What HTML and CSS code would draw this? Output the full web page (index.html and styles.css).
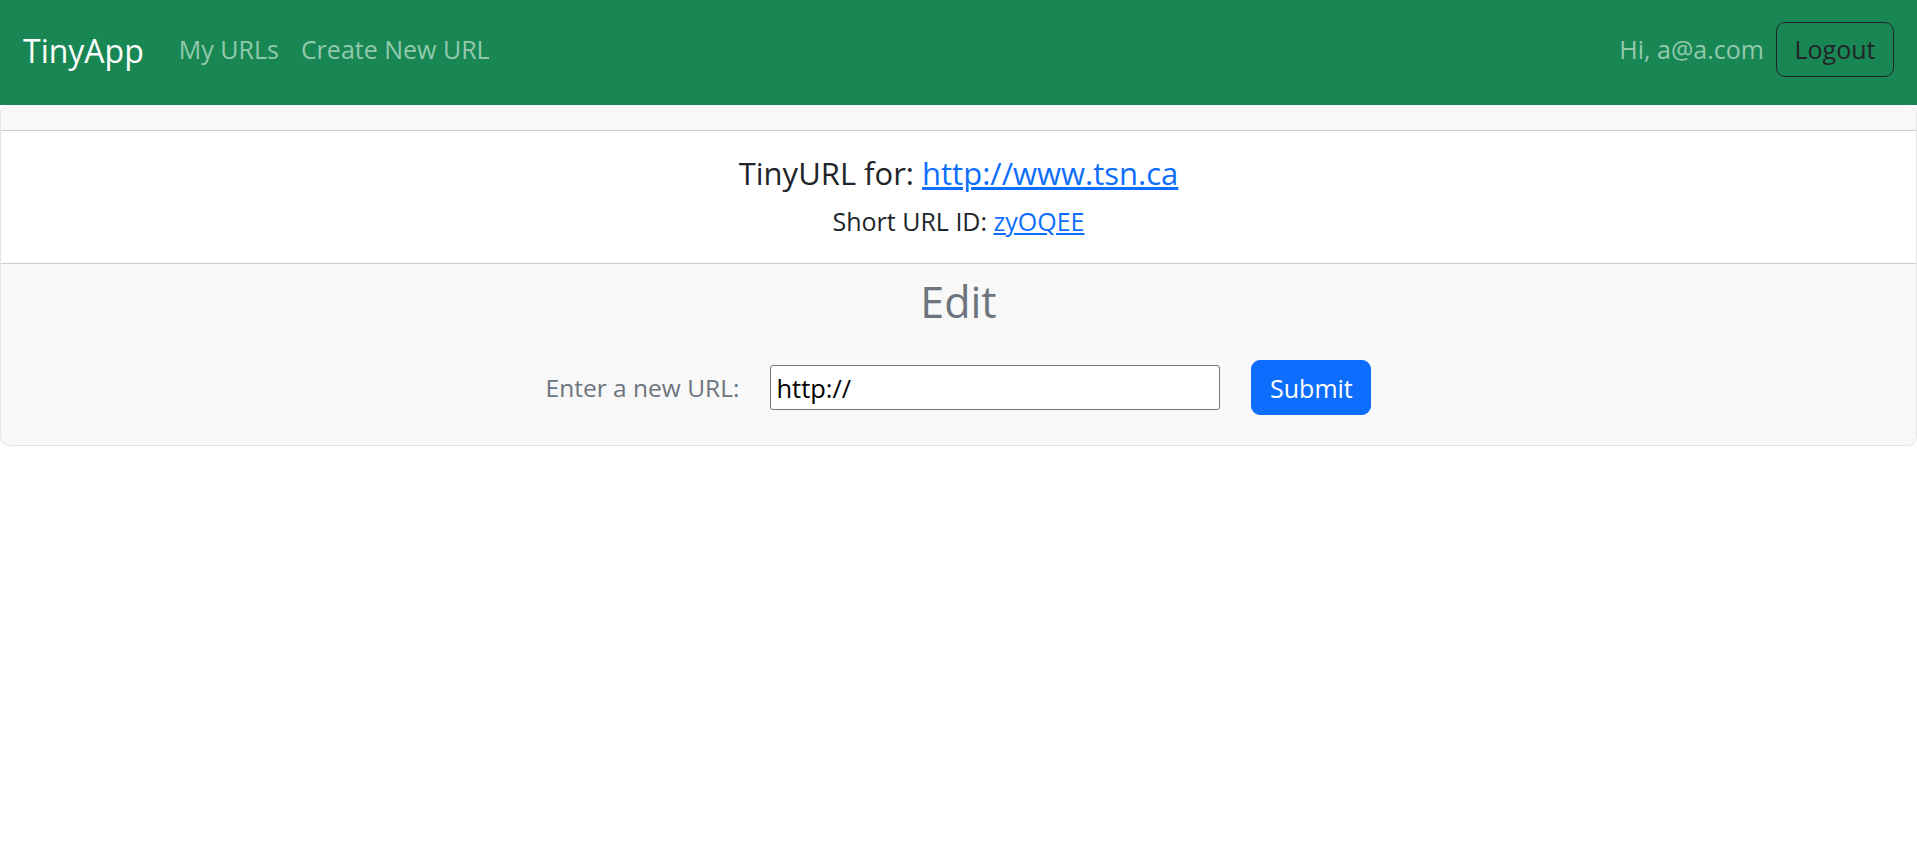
FILE: index.html
```html
<!DOCTYPE html>
<html lang="en">
<head>
<meta charset="utf-8">
<title>TinyApp</title>
<link rel="stylesheet" href="styles.css">
</head>
<body>
  <nav class="navbar">
    <div class="nav-left">
      <a class="brand" href="#">TinyApp</a>
      <a class="nav-link" href="#">My URLs</a>
      <a class="nav-link" href="#">Create New URL</a>
    </div>
    <div class="nav-right">
      <span class="nav-text">Hi, a@a.com</span>
      <button class="btn-logout" type="button">Logout</button>
    </div>
  </nav>
  <main class="card">
    <div class="card-header"></div>
    <div class="card-body">
      <h5 class="card-title">TinyURL for: <a href="#">http://www.tsn.ca</a></h5>
      <p class="card-text">Short URL ID: <a href="#">zyOQEE</a></p>
    </div>
    <div class="card-footer">
      <h2 class="edit-title">Edit</h2>
      <form class="edit-form">
        <label class="edit-label" for="longURL">Enter a new URL:</label>
        <input class="edit-input" id="longURL" type="text" value="http://">
        <button class="btn-submit" type="submit">Submit</button>
      </form>
    </div>
  </main>
</body>
</html>
```

FILE: styles.css
```css
* {
  box-sizing: border-box;
}

body {
  margin: 0;
  font-family: "Open Sans", "Noto Sans", sans-serif;
  color: #212529;
  background: #ffffff;
}

a {
  color: #0d6efd;
}

.navbar {
  height: 105px;
  background: #198754;
  display: flex;
  align-items: center;
  justify-content: space-between;
  padding: 0 23px 7px 23px;
}

.nav-left,
.nav-right {
  display: flex;
  align-items: center;
}

.brand {
  color: #ffffff;
  text-decoration: none;
  font-size: 32px;
  line-height: 42px;
  padding-top: 4px;
  margin-right: 24px;
}

.nav-link {
  color: #92c9ad;
  text-decoration: none;
  font-size: 25px;
  line-height: 34px;
  padding: 0 11px;
}

.nav-text {
  color: #92c9ad;
  font-size: 25px;
  line-height: 34px;
  margin-right: 12px;
}

.btn-logout {
  width: 118px;
  height: 55px;
  border: 1px solid #212529;
  border-radius: 9px;
  background: transparent;
  color: #212529;
  font-family: inherit;
  font-size: 25px;
  padding: 0;
}

.card {
  display: block;
  border: 1px solid rgba(0, 0, 0, 0.1);
  border-top-color: rgba(0, 0, 0, 0.04);
  border-radius: 9px;
  overflow: hidden;
}

.card-header {
  height: 25px;
  background: rgba(33, 37, 41, 0.03);
  border-bottom: 1px solid rgba(0, 0, 0, 0.175);
}

.card-body {
  height: 132px;
  padding-top: 24px;
  text-align: center;
}

.card-title {
  margin: 0 0 13px;
  font-size: 31px;
  font-weight: 400;
  line-height: 36px;
}

.card-text {
  margin: 0;
  font-size: 25px;
  line-height: 34px;
}

.card-footer {
  background: rgba(33, 37, 41, 0.03);
  border-top: 1px solid rgba(0, 0, 0, 0.175);
  padding: 11px 0 30px;
  text-align: center;
}

.edit-title {
  margin: 0 0 32px;
  font-size: 43px;
  font-weight: 400;
  line-height: 53px;
  color: #6c757d;
}

.edit-form {
  display: flex;
  align-items: center;
  justify-content: center;
  gap: 31px;
  height: 55px;
}

.edit-label {
  color: #6c757d;
  font-size: 24.5px;
  line-height: 34px;
}

.edit-input {
  width: 450px;
  height: 45px;
  border: 1px solid #767676;
  border-radius: 3px;
  padding: 0 5px;
  font-family: inherit;
  font-size: 25.5px;
  color: #000000;
  background: #ffffff;
}

.btn-submit {
  width: 120px;
  height: 55px;
  border: 1px solid #0d6efd;
  border-radius: 9px;
  background: #0d6efd;
  color: #ffffff;
  font-family: inherit;
  font-size: 25px;
  padding: 0;
}
```
